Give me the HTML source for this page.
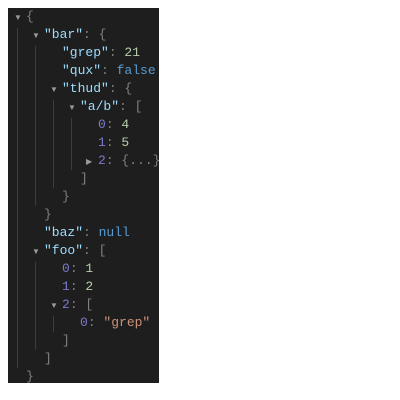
<!DOCTYPE html><html><head><style>
body{margin:0;background:#fff;width:400px;height:400px;position:relative;overflow:hidden}
#p{position:absolute;left:8px;top:8px;width:151px;height:375px;background:#1e1e1e;overflow:hidden}
.l{position:absolute;height:18px;line-height:18px;font:13px "Liberation Mono",monospace;white-space:pre;color:#808080}
.t{position:absolute;font-size:8px;color:#9a9a9a;line-height:18px}
.g{position:absolute;width:1px;background:#3c3c3c}
.k{color:#9cdcfe}.n{color:#b5cea8}.b{color:#569cd6}.i{color:#7a7ad0}.s{color:#ce9178}
</style></head><body><div id="p">
<div class="g" style="left:9px;top:20px;height:340px"></div>
<div class="g" style="left:27px;top:38px;height:160px"></div>
<div class="g" style="left:27px;top:254px;height:88px"></div>
<div class="g" style="left:45px;top:92px;height:88px"></div>
<div class="g" style="left:45px;top:308px;height:16px"></div>
<div class="g" style="left:63px;top:110px;height:52px"></div>
</div>
<div id="c" style="position:absolute;left:0;top:3px">
<span class="t" style="left:14px;top:6px">▼</span><div class="l" style="left:26px;top:6px">{</div>
<span class="t" style="left:32px;top:24px">▼</span><div class="l" style="left:44px;top:24px"><span class="k">"bar"</span>: {</div>
<div class="l" style="left:62px;top:42px"><span class="k">"grep"</span>: <span class="n">21</span></div>
<div class="l" style="left:62px;top:60px"><span class="k">"qux"</span>: <span class="b">false</span></div>
<span class="t" style="left:50px;top:78px">▼</span><div class="l" style="left:62px;top:78px"><span class="k">"thud"</span>: {</div>
<span class="t" style="left:68px;top:96px">▼</span><div class="l" style="left:80px;top:96px"><span class="k">"a/b"</span>: [</div>
<div class="l" style="left:98px;top:114px"><span class="i">0</span>: <span class="n">4</span></div>
<div class="l" style="left:98px;top:132px"><span class="i">1</span>: <span class="n">5</span></div>
<span class="t" style="left:86px;top:150px">▶</span><div class="l" style="left:98px;top:150px"><span class="i">2</span>: {...}</div>
<div class="l" style="left:80px;top:168px">]</div>
<div class="l" style="left:62px;top:186px">}</div>
<div class="l" style="left:44px;top:204px">}</div>
<div class="l" style="left:44px;top:222px"><span class="k">"baz"</span>: <span class="b">null</span></div>
<span class="t" style="left:32px;top:240px">▼</span><div class="l" style="left:44px;top:240px"><span class="k">"foo"</span>: [</div>
<div class="l" style="left:62px;top:258px"><span class="i">0</span>: <span class="n">1</span></div>
<div class="l" style="left:62px;top:276px"><span class="i">1</span>: <span class="n">2</span></div>
<span class="t" style="left:50px;top:294px">▼</span><div class="l" style="left:62px;top:294px"><span class="i">2</span>: [</div>
<div class="l" style="left:80px;top:312px"><span class="i">0</span>: <span class="s">"grep"</span></div>
<div class="l" style="left:62px;top:330px">]</div>
<div class="l" style="left:44px;top:348px">]</div>
<div class="l" style="left:26px;top:366px">}</div>
</div>
</body></html>
